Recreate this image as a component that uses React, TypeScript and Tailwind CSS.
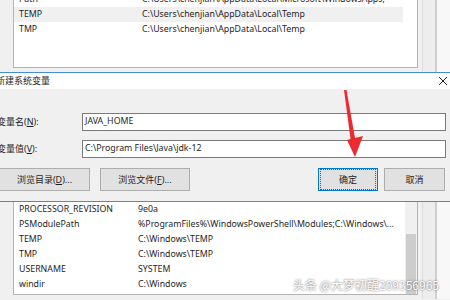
const font = "font-['Noto_Sans','Noto_Sans_CJK_SC',sans-serif]";

const topRows = [
  { name: "Path", value: "C:\\Users\\chenjian\\AppData\\Local\\Microsoft\\WindowsApps;", selected: false },
  { name: "TEMP", value: "C:\\Users\\chenjian\\AppData\\Local\\Temp", selected: true },
  { name: "TMP", value: "C:\\Users\\chenjian\\AppData\\Local\\Temp", selected: false },
];

const bottomRows = [
  { name: "PROCESSOR_REVISION", value: "9e0a" },
  { name: "PSModulePath", value: "%ProgramFiles%\\WindowsPowerShell\\Modules;C:\\Windows\\..." },
  { name: "TEMP", value: "C:\\Windows\\TEMP" },
  { name: "TMP", value: "C:\\Windows\\TEMP" },
  { name: "USERNAME", value: "SYSTEM" },
  { name: "windir", value: "C:\\Windows" },
];

function FrameStrip() {
  return (
    <div className="flex h-full">
      <div className="w-[4px] bg-[#f0f0f0]" />
      <div className="w-[13px] border-l border-[#dcdcdc] bg-[#ededed]" />
      <div className="w-[2px] bg-[#cfcfcf]" />
      <div className="flex-1 bg-[#f8f8f8]" />
    </div>
  );
}

function Btn({ children, focused, className }: { children: React.ReactNode; focused?: boolean; className?: string }) {
  return (
    <div
      className={`h-[23px] flex items-center justify-center bg-[#e1e1e1] border ${
        focused ? "border-[#0078d7]" : "border-[#adadad]"
      } ${className ?? ""}`}
    >
      <div className={`w-full h-full flex items-center justify-center ${focused ? "border border-dotted border-[#3a5f86] m-[1px]" : ""}`}>
        {children}
      </div>
    </div>
  );
}

export default function App() {
  return (
    <div className={`w-[450px] h-[300px] overflow-hidden bg-[#f0f0f0] text-[#1e1e1e] text-[8.8px] ${font} relative`}>
      {/* upper list (user variables) */}
      <div className="h-[72px] flex">
        <div className="w-[13px]" />
        <div className="w-[405px] h-[68px] bg-white border-x border-b border-[#b4b4b4] overflow-hidden">
          <div className="-mt-[8px]">
            {topRows.map((r) => (
              <div key={r.name} className={`h-[15px] flex items-center ${r.selected ? "bg-[#f0f0f0] mr-[14px]" : ""}`}>
                <span className="w-[128px] pl-[5px] shrink-0">{r.name}</span>
                <span className="whitespace-nowrap">{r.value}</span>
              </div>
            ))}
          </div>
        </div>
        <div className="flex-1">
          <FrameStrip />
        </div>
      </div>

      {/* dialog */}
      <div className="border-y border-[#3f8fd2] h-[130px] flex flex-col">
        <div className="h-[16px] bg-white flex items-center justify-between">
          <span className="-ml-[4px] text-[9px]">新建系统变量</span>
          <svg width="10" height="10" viewBox="0 0 10 10" className="mr-[2px]">
            <path d="M1 1 L9 9 M9 1 L1 9" stroke="#222" strokeWidth="1" />
          </svg>
        </div>
        <div className="flex-1 bg-[#f0f0f0] flex flex-col pt-[24px]">
          <div className="flex items-center h-[18px]">
            <span className="w-[85px] -ml-[3px] shrink-0 text-[9px]">
              变量名(<span className="underline">N</span>):
            </span>
            <div className="w-[364px] h-[18px] bg-white border border-[#7a7a7a] flex items-center pl-[2px]">JAVA_HOME</div>
          </div>
          <div className="flex items-center h-[18px] mt-[9px]">
            <span className="w-[85px] -ml-[3px] shrink-0 text-[9px]">
              变量值(<span className="underline">V</span>):
            </span>
            <div className="w-[364px] h-[18px] bg-white border border-[#7a7a7a] flex items-center pl-[2px]">
              C:\Program Files\Java\jdk-12
            </div>
          </div>
          <div className="flex mt-[10px] text-[9px]">
            <Btn className="w-[91px] -ml-[1px]">
              浏览目录(<span className="underline">D</span>)...
            </Btn>
            <Btn className="w-[90px] ml-[10px]">
              浏览文件(<span className="underline">F</span>)...
            </Btn>
            <Btn focused className="w-[60px] ml-[128px]">
              确定
            </Btn>
            <Btn className="w-[61px] ml-[6px]">取消</Btn>
          </div>
        </div>
      </div>

      {/* lower list (system variables) */}
      <div className="h-[97px] flex">
        <div className="w-[13px]" />
        <div className="w-[405px] h-[93px] bg-white border-x border-b border-[#b4b4b4] flex overflow-hidden">
          <div className="flex-1 min-w-0">
            {bottomRows.map((r) => (
              <div key={r.name} className="h-[15px] flex items-center">
                <span className="w-[124px] pl-[5px] shrink-0">{r.name}</span>
                <span className="whitespace-nowrap overflow-hidden">{r.value}</span>
              </div>
            ))}
          </div>
          <div className="w-[12px] bg-[#f0f0f0] flex flex-col">
            <div className="h-[32px]" />
            <div className="mx-[1px] flex-1 bg-[#cdcdcd]" />
          </div>
        </div>
        <div className="flex-1">
          <FrameStrip />
        </div>
      </div>

      {/* red annotation arrow */}
      <svg className="absolute inset-0 pointer-events-none" width="450" height="300">
        <polygon points="344,90 346.5,90 355,138 363,136 355,157 347,140 350.5,139" fill="#ec2a2f" />
      </svg>

      {/* watermark */}
      <div className="absolute left-[293px] top-[276px] text-white text-[12px] font-['Noto_Sans_CJK_SC',sans-serif] [text-shadow:0_0_2px_rgba(0,0,0,0.7)] whitespace-nowrap">
        头条 @大梦初醒209356965
      </div>
    </div>
  );
}
